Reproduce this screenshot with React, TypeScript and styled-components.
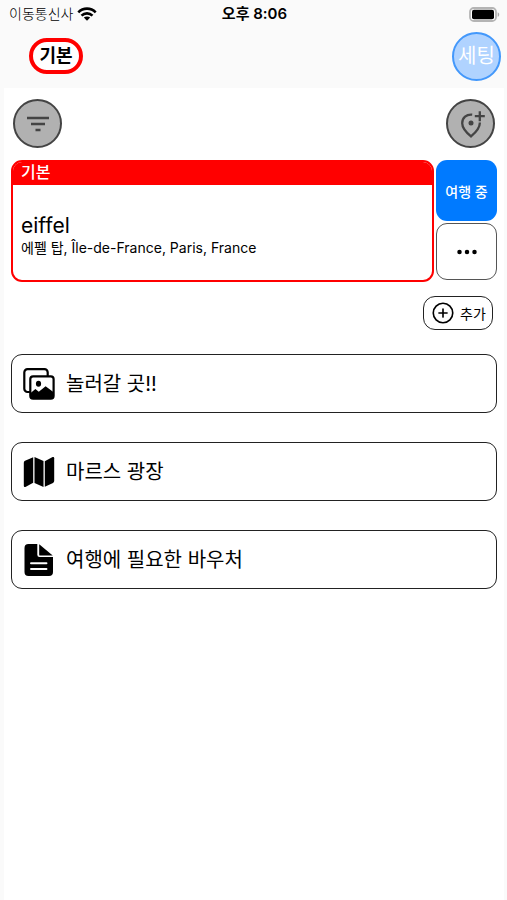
import React from "react";
import styled, { createGlobalStyle } from "styled-components";
import { IoAddCircleOutline, IoEllipsisHorizontal } from "react-icons/io5";

const GlobalStyle = createGlobalStyle`
  * { box-sizing: border-box; }
  body {
    margin: 0;
    background: #fafafa;
    color: #000;
    font-family: Inter, "Noto Sans CJK KR", sans-serif;
  }
  button { font: inherit; color: inherit; cursor: pointer; padding: 0; }
  svg { display: block; flex: none; }
`;

const Screen = styled.div`
  min-height: 100vh;
  display: flex;
  flex-direction: column;
`;

const StatusBar = styled.div`
  height: 28px;
  padding: 0 7px 0 9px;
  display: grid;
  grid-template-columns: 1fr auto 1fr;
  align-items: center;
  font-size: 14px;
  line-height: 20px;
`;

const Carrier = styled.span`
  display: flex;
  align-items: center;
  gap: 4px;
  font-weight: 300;
`;

const Clock = styled.time`
  font-size: 15px;
  font-weight: 600;
`;

const BatterySlot = styled.span`
  justify-self: end;
`;

const Header = styled.header`
  height: 60px;
  padding: 0 6px 4px 29px;
  display: flex;
  align-items: center;
  justify-content: space-between;
`;

const GroupPill = styled.button`
  height: 36px;
  width: 54px;
  border: 4px solid #f00;
  border-radius: 18px;
  background: #fff;
  font-size: 18px;
  line-height: 28px;
  font-weight: 600;
`;

const RoundButton = styled.button<{ $tone: "blue" | "grey" }>`
  width: 49px;
  height: 49px;
  display: grid;
  place-items: center;
  border-radius: 50%;
  border: 2px solid ${(p) => (p.$tone === "blue" ? "#4398fb" : "#444")};
  background: ${(p) => (p.$tone === "blue" ? "#b0d3ff" : "#b1b1b1")};
  color: ${(p) => (p.$tone === "blue" ? "#fff" : "#444")};
  font-size: 20px;
  line-height: 28px;
`;

const Content = styled.main`
  flex: 1;
  margin: 0 3px 0 4px;
  padding: 11px 7px;
  background: #fff;
`;

const Toolbar = styled.div`
  display: flex;
  justify-content: space-between;
  padding: 0 2px;
  margin-bottom: 12px;
`;

const PlaceRow = styled.div`
  display: flex;
  gap: 2px;
  height: 122px;
`;

const PlaceCard = styled.article`
  flex: 1;
  min-width: 0;
  display: flex;
  flex-direction: column;
  border: 2px solid #f00;
  border-radius: 11px;
  overflow: hidden;
`;

const CardLabel = styled.div`
  height: 23px;
  padding: 0 8px;
  background: #f00;
  color: #fff;
  font-size: 16px;
  line-height: 21px;
  font-weight: 500;
`;

const CardBody = styled.div`
  flex: 1;
  display: flex;
  flex-direction: column;
  justify-content: center;
  padding: 6px 8px 0;
`;

const PlaceName = styled.h2`
  margin: 0;
  font-size: 21px;
  line-height: 24px;
  font-weight: 400;
`;

const Address = styled.p`
  margin: 0;
  font-size: 14px;
  line-height: 20px;
`;

const SideActions = styled.div`
  width: 61px;
  display: flex;
  flex-direction: column;
  gap: 2px;
`;

const StateButton = styled.button`
  height: 61px;
  border: 0;
  border-radius: 11px;
  background: #007aff;
  color: #fff;
  font-size: 14px;
  font-weight: 500;
`;

const MoreButton = styled.button`
  height: 57px;
  display: grid;
  place-items: center;
  border: 1px solid #555;
  border-radius: 11px;
  background: #fff;
`;

const AddRow = styled.div`
  display: flex;
  justify-content: flex-end;
  padding: 14px 4px 24px 0;
`;

const AddButton = styled.button`
  width: 70px;
  height: 34px;
  display: flex;
  align-items: center;
  justify-content: center;
  gap: 4px;
  border: 1px solid #222;
  border-radius: 12px;
  background: #fff;
  font-size: 14px;
`;

const List = styled.ul`
  margin: 0;
  padding: 0;
  list-style: none;
  display: grid;
  gap: 29px;
`;

const ListButton = styled.button`
  width: 100%;
  height: 59px;
  padding: 0 11px;
  display: flex;
  align-items: center;
  gap: 11px;
  border: 1px solid #222;
  border-radius: 11px;
  background: #fff;
  font-size: 20px;
  line-height: 28px;
  text-align: left;
`;

const Wifi = () => (
  <svg width="20" height="14" viewBox="0 0 20 14" fill="none" stroke="#000" strokeWidth="2.6" aria-hidden="true">
    <path d="M1.3 5.3C6.2 .4 13.8 .4 18.7 5.3" />
    <path d="M4.5 8.6C7.6 5.6 12.4 5.6 15.5 8.6" />
    <path d="M10 13.8 6.8 10.6C8.7 9 11.3 9 13.2 10.6Z" fill="#000" stroke="none" />
  </svg>
);

const Battery = () => (
  <svg width="31" height="15" viewBox="0 0 31 15" aria-hidden="true">
    <rect x="1" y="1" width="26" height="13" rx="3.8" fill="#fff" stroke="#b4b4b4" strokeWidth="1.8" />
    <rect x="3" y="2.8" width="22" height="9.4" rx="2" fill="#000" />
    <path d="M28.7 5.2c2 .8 2 3.8 0 4.6Z" fill="#aaa" />
  </svg>
);

const FilterIcon = () => (
  <svg width="24" height="18" viewBox="0 0 24 18" stroke="currentColor" strokeWidth="2.3" aria-hidden="true">
    <path d="M1 3h22M5 9h14M9.5 15h5" />
  </svg>
);

const PinPlusIcon = () => (
  <svg width="32" height="32" viewBox="0 0 32 32" fill="none" stroke="currentColor" strokeWidth="2.3" aria-hidden="true">
    <path d="M17.2 6.6C11.4 6 7.2 10 7.2 15.2c0 4.4 3.2 8.5 8.8 13.2 5.5-4.7 8.8-8.800 8.800-13.200v-.7" />
    <path d="M24.8 3.2v10M19.8 8.2h10" />
    <circle cx="16" cy="15" r="2.5" fill="currentColor" stroke="none" />
  </svg>
);

const PhotosIcon = () => (
  <svg width="32" height="32" viewBox="0 0 32 32" fill="none" stroke="currentColor" strokeWidth="2.2" aria-hidden="true">
    <path d="M7 24H4.5A3.2 3.2 0 0 1 1.3 20.8V4.4A3.2 3.2 0 0 1 4.5 1.2H21.5A3.2 3.2 0 0 1 24.7 4.4V8" />
    <rect x="7.3" y="8.3" width="23.3" height="22.3" rx="2.8" />
    <ellipse cx="15.5" cy="15.8" rx="2.6" ry="3" fill="currentColor" stroke="none" />
    <path d="M7 25.5 12.4 21 15.8 23.8 22.6 18.2 31 24.5V28a3 3 0 0 1-3 3H10a3 3 0 0 1-3-3Z" fill="currentColor" stroke="none" />
  </svg>
);

const MapIcon = () => (
  <svg width="32" height="32" viewBox="0 0 32 32" fill="currentColor" aria-hidden="true">
    <path d="M10.2 1.2v25.600L2.400 30.900Q.8 31.500.8 29.800V6.700Q.8 5.500 2 4.800Z" />
    <path d="M11.500 1 20.500 5.100V31L11.500 26.900Z" />
    <path d="M21.800 5.200 29.600 1.100Q31.200.5 31.200 2.200V25.100Q31.200 26.300 30 27L21.800 30.800Z" />
  </svg>
);

const DocumentIcon = () => (
  <svg width="32" height="32" viewBox="0 0 32 32" fill="currentColor" aria-hidden="true">
    <path d="M14.3 0v10.800a2.200 2.200 0 0 0 2.200 2.200H30v15a4 4 0 0 1-4 4H5.500a4 4 0 0 1-4-4V4a4 4 0 0 1 4-4Z" />
    <path d="M16.200.2 29.700 11.600H17.100a.9.9 0 0 1-.9-.9Z" />
    <path d="M8 19.300h15.500M8 25h15.500" stroke="#fff" strokeWidth="1.9" strokeLinecap="round" />
  </svg>
);

const items = [
  { label: "놀러갈 곳!!", icon: <PhotosIcon /> },
  { label: "마르스 광장", icon: <MapIcon /> },
  { label: "여행에 필요한 바우처", icon: <DocumentIcon /> },
];

export default function App() {
  return (
    <Screen>
      <GlobalStyle />
      <StatusBar>
        <Carrier>
          이동통신사
          <Wifi />
        </Carrier>
        <Clock>오후 8:06</Clock>
        <BatterySlot>
          <Battery />
        </BatterySlot>
      </StatusBar>
      <Header>
        <GroupPill type="button">기본</GroupPill>
        <RoundButton type="button" $tone="blue">세팅</RoundButton>
      </Header>
      <Content>
        <Toolbar>
          <RoundButton type="button" $tone="grey" aria-label="필터">
            <FilterIcon />
          </RoundButton>
          <RoundButton type="button" $tone="grey" aria-label="장소 추가">
            <PinPlusIcon />
          </RoundButton>
        </Toolbar>
        <PlaceRow>
          <PlaceCard>
            <CardLabel>기본</CardLabel>
            <CardBody>
              <PlaceName>eiffel</PlaceName>
              <Address>에펠 탑, Île-de-France, Paris, France</Address>
            </CardBody>
          </PlaceCard>
          <SideActions>
            <StateButton type="button">여행 중</StateButton>
            <MoreButton type="button" aria-label="더 보기">
              <IoEllipsisHorizontal size={24} aria-hidden="true" />
            </MoreButton>
          </SideActions>
        </PlaceRow>
        <AddRow>
          <AddButton type="button">
            <IoAddCircleOutline size={26} aria-hidden="true" />
            추가
          </AddButton>
        </AddRow>
        <List>
          {items.map((item) => (
            <li key={item.label}>
              <ListButton type="button">
                {item.icon}
                {item.label}
              </ListButton>
            </li>
          ))}
        </List>
      </Content>
    </Screen>
  );
}
